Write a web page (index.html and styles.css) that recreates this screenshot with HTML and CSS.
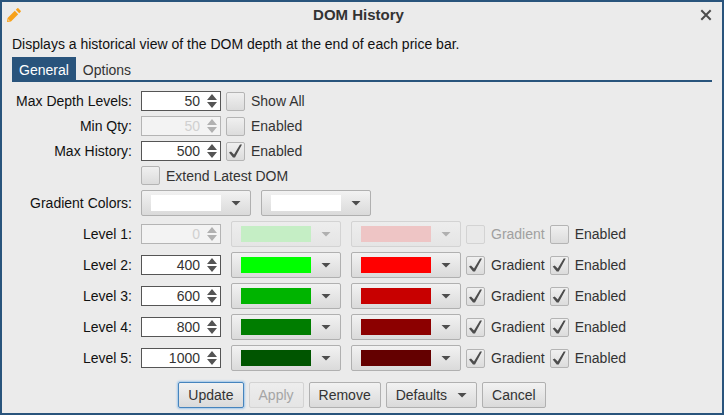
FILE: index.html
```html
<!DOCTYPE html>
<html lang="en">
<head>
  <meta charset="UTF-8">
  <title>DOM History</title>
  <meta name="viewport" content="width=device-width,initial-scale=1">
  <link rel="stylesheet" href="styles.css">
</head>
<body>
  <div class="dialog" role="dialog" aria-labelledby="title">
    <header class="titlebar">
      <button class="icon-btn" aria-label="Edit">
        <svg width="14" height="14" viewBox="0 0 14 14" fill="#f7a11a"><path d="M0 14l.6-4L7.800 2.800l3.400 3.400L4 13.400zM8.800 1.800L10.300.3q.5-.4 1 0l2.400 2.400q.4.500 0 1L12.200 5.200z"/><path d="M1.200 12.800l.3-1.500 1.200 1.200z" fill="#ebebeb"/></svg>
      </button>
      <h1 id="title">DOM History</h1>
      <button class="icon-btn" aria-label="Close">
        <svg width="12" height="12" viewBox="0 0 12 12" stroke="#4d4d4d" stroke-width="2"><path d="M1.300 1.300l9.400 9.400M10.700 1.300l-9.400 9.400"/></svg>
      </button>
    </header>
    <p class="description">Displays a historical view of the DOM depth at the end of each price bar.</p>

    <div class="tabs" role="tablist">
      <button class="tab active" role="tab" aria-selected="true">General</button>
      <button class="tab" role="tab" aria-selected="false">Options</button>
    </div>

    <form class="settings" id="settings">
      <div class="row">
        <label class="name" for="depth">Max Depth Levels:</label>
        <div class="spinner"><input type="number" id="depth" value="50"></div>
        <label class="check"><input type="checkbox">Show All</label>
      </div>
      <div class="row">
        <label class="name" for="minQty">Min Qty:</label>
        <div class="spinner"><input type="number" id="minQty" value="50" disabled></div>
        <label class="check"><input type="checkbox">Enabled</label>
      </div>
      <div class="row">
        <label class="name" for="history">Max History:</label>
        <div class="spinner"><input type="number" id="history" value="500"></div>
        <label class="check"><input type="checkbox" checked>Enabled</label>
      </div>
      <div class="row">
        <span class="name"></span>
        <label class="check"><input type="checkbox">Extend Latest DOM</label>
      </div>
      <div class="row">
        <span class="name">Gradient Colors:</span>
        <div class="colors">
          <button type="button" class="btn color" aria-label="Bid gradient color" aria-haspopup="true"><span class="swatch white"></span><span class="arrow"></span></button>
          <button type="button" class="btn color" aria-label="Ask gradient color" aria-haspopup="true"><span class="swatch white"></span><span class="arrow"></span></button>
        </div>
      </div>

      <div class="row level">
        <label class="name" for="level1">Level 1:</label>
        <div class="spinner"><input type="number" id="level1" value="0" disabled></div>
        <div class="colors">
          <button type="button" class="btn color" aria-label="Level 1 bid color" aria-haspopup="true" disabled><span class="swatch bid1"></span><span class="arrow"></span></button>
          <button type="button" class="btn color" aria-label="Level 1 ask color" aria-haspopup="true" disabled><span class="swatch ask1"></span><span class="arrow"></span></button>
        </div>
        <label class="check off"><input type="checkbox" disabled>Gradient</label>
        <label class="check"><input type="checkbox">Enabled</label>
      </div>
      <div class="row level">
        <label class="name" for="level2">Level 2:</label>
        <div class="spinner"><input type="number" id="level2" value="400"></div>
        <div class="colors">
          <button type="button" class="btn color" aria-label="Level 2 bid color" aria-haspopup="true"><span class="swatch bid2"></span><span class="arrow"></span></button>
          <button type="button" class="btn color" aria-label="Level 2 ask color" aria-haspopup="true"><span class="swatch ask2"></span><span class="arrow"></span></button>
        </div>
        <label class="check"><input type="checkbox" checked>Gradient</label>
        <label class="check"><input type="checkbox" checked>Enabled</label>
      </div>
      <div class="row level">
        <label class="name" for="level3">Level 3:</label>
        <div class="spinner"><input type="number" id="level3" value="600"></div>
        <div class="colors">
          <button type="button" class="btn color" aria-label="Level 3 bid color" aria-haspopup="true"><span class="swatch bid3"></span><span class="arrow"></span></button>
          <button type="button" class="btn color" aria-label="Level 3 ask color" aria-haspopup="true"><span class="swatch ask3"></span><span class="arrow"></span></button>
        </div>
        <label class="check"><input type="checkbox" checked>Gradient</label>
        <label class="check"><input type="checkbox" checked>Enabled</label>
      </div>
      <div class="row level">
        <label class="name" for="level4">Level 4:</label>
        <div class="spinner"><input type="number" id="level4" value="800"></div>
        <div class="colors">
          <button type="button" class="btn color" aria-label="Level 4 bid color" aria-haspopup="true"><span class="swatch bid4"></span><span class="arrow"></span></button>
          <button type="button" class="btn color" aria-label="Level 4 ask color" aria-haspopup="true"><span class="swatch ask4"></span><span class="arrow"></span></button>
        </div>
        <label class="check"><input type="checkbox" checked>Gradient</label>
        <label class="check"><input type="checkbox" checked>Enabled</label>
      </div>
      <div class="row level">
        <label class="name" for="level5">Level 5:</label>
        <div class="spinner"><input type="number" id="level5" value="1000"></div>
        <div class="colors">
          <button type="button" class="btn color" aria-label="Level 5 bid color" aria-haspopup="true"><span class="swatch bid5"></span><span class="arrow"></span></button>
          <button type="button" class="btn color" aria-label="Level 5 ask color" aria-haspopup="true"><span class="swatch ask5"></span><span class="arrow"></span></button>
        </div>
        <label class="check"><input type="checkbox" checked>Gradient</label>
        <label class="check"><input type="checkbox" checked>Enabled</label>
      </div>
    </form>

    <footer class="actions">
      <button class="btn primary">Update</button>
      <button class="btn" disabled>Apply</button>
      <button class="btn">Remove</button>
      <button class="btn" aria-haspopup="true">Defaults<span class="arrow"></span></button>
      <button class="btn">Cancel</button>
    </footer>
  </div>
  <script src="script.js"></script>
</body>
</html>
```
FILE: styles.css
```css
* { box-sizing:border-box; margin:0; padding:0; }
body { background:#ebebeb; color:#333; font:14px/16px 'Liberation Sans',Arial,sans-serif; }
button, input { font:inherit; color:inherit; }

.dialog { min-height:100vh; padding:0 10px 5px; border:2px solid #29547c; background:#ebebeb; }

/* title bar */
.titlebar { display:flex; align-items:center; justify-content:space-between; height:26px; margin-left:-5px; }
.titlebar h1 { flex:1; padding-right:4px; font-size:15px; font-weight:bold; text-align:center; }
.icon-btn { display:flex; border:none; background:none; }
.description { padding:8px 0 5px; color:#111; }

/* tabs */
.tabs { display:flex; border-bottom:2px solid #29547c; }
.tab { height:23px; padding:2px 7px 0; border:none; background:none; }
.tab.active { background:#29547c; color:#fff; }

/* settings */
.settings { display:flex; flex-direction:column; gap:5px; padding-top:9px; }
.row { display:flex; align-items:center; gap:5px; }
.name { width:120px; margin-right:4px; text-align:right; color:#111; }
.colors { display:flex; gap:10px; }
.level .colors { margin-left:5px; }

.spinner { display:flex; align-items:center; width:80px; height:20px; padding-right:3px; border:1px solid #555; background:#fff; }
.spinner input { flex:1; min-width:0; padding-right:7px; border:none; outline:none; background:none; text-align:right; appearance:textfield; -moz-appearance:textfield; }
.spinner input::-webkit-inner-spin-button { appearance:none; margin:0; }
.spinner::after { content:''; width:10px; height:14px; background:#555; clip-path:polygon(50% 0, 100% 6px, 0 6px, 0 8px, 100% 8px, 50% 100%, 0 8px, 0 6px); }
.spinner:has(:disabled) { border-color:#b4b4b4; background:#f3f3f3; color:#d0d0d0; }
.spinner:has(:disabled)::after { background:#b0b0b0; }

.check { display:flex; align-items:center; gap:6px; }
.check input { appearance:none; width:19px; height:19px; border:1px solid #b4b4b4; border-radius:2px; background:linear-gradient(#f0f0f0,#dcdcdc); }
.check input:checked::before { content:''; display:block; height:17px; background:#4d4d4d; clip-path:polygon(2px 10px, 4px 9px, 7px 12px, 13px 2px, 15px 2px, 8px 15px, 6px 15px); }
.check.off { color:#a0a0a0; }
.check input:disabled { border-color:#d3d3d3; background:#e9e9e9; }

/* buttons */
.btn { display:flex; align-items:center; height:26px; padding:0 9px; border:1px solid #b0b0b0; border-radius:2px; background:linear-gradient(#f2f2f2,#dadada); }
.btn:disabled { border-color:#d3d3d3; background:linear-gradient(#ededed,#e5e5e5); color:#a5a5a5; }
.btn.primary { border-color:#4684bd; box-shadow:0 0 2px 1px #9fc6ea; }
.arrow { width:10px; height:5px; margin-left:10px; background:#4d4d4d; clip-path:polygon(0 0, 100% 0, 50% 100%); }
.btn:disabled .arrow { background:#b0b0b0; }
.color { width:110px; }
.swatch { width:70px; height:16px; }
.white { background:#fff; }
.bid1 { background:#c5eec5; }
.ask1 { background:#eec5c5; }
.bid2 { background:#0f0; }
.ask2 { background:#f00; }
.bid3 { background:#00b400; }
.ask3 { background:#c80000; }
.bid4 { background:#007d00; }
.ask4 { background:#8c0000; }
.bid5 { background:#005500; }
.ask5 { background:#640000; }

.actions { display:flex; justify-content:center; gap:5px; padding-top:11px; }
```
FILE: script.js
```js
// switch the highlighted tab
const tabs = document.querySelectorAll('.tab');
tabs.forEach(tab => {
  tab.addEventListener('click', () => {
    tabs.forEach(t => {
      t.classList.toggle('active', t === tab);
      t.setAttribute('aria-selected', t === tab);
    });
    document.getElementById('settings').hidden = tab !== tabs[0];
  });
});
```
